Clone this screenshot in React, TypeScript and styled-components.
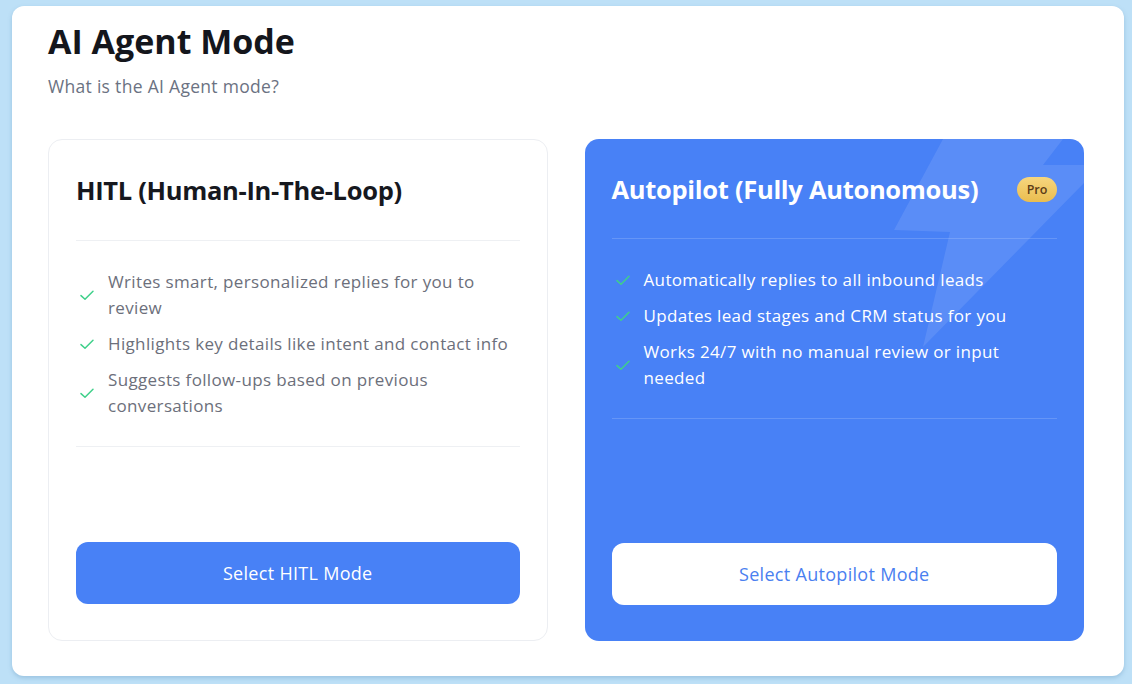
import styled, { createGlobalStyle } from "styled-components";

const GlobalStyle = createGlobalStyle`
  html, body {
    margin: 0;
    padding: 0;
    background: #bde0f7;
    font-family: "Open Sans", "Noto Sans", sans-serif;
  }
  * {
    box-sizing: border-box;
  }
`;

const Page = styled.div`
  width: 1132px;
  height: 684px;
  padding: 6px 8px 8px 12px;
`;

const Panel = styled.div`
  height: 100%;
  background: #ffffff;
  border-radius: 12px;
  box-shadow: 0 2px 4px rgba(90, 140, 180, 0.35);
  padding: 15px 40px 0 36px;
`;

const Title = styled.h1`
  margin: 0;
  font-size: 34px;
  line-height: 40px;
  font-weight: 700;
  color: #14161c;
`;

const Subtitle = styled.p`
  margin: 13px 0 0;
  font-size: 17.5px;
  line-height: 24px;
  letter-spacing: 0.3px;
  color: #6b7282;
`;

const Cards = styled.div`
  margin-top: 41px;
  display: grid;
  grid-template-columns: 1fr 1fr;
  gap: 37px;
  height: 502px;
`;

const Card = styled.div<{ $featured?: boolean }>`
  position: relative;
  overflow: hidden;
  display: flex;
  flex-direction: column;
  border-radius: 14px;
  padding: 34px 27px 36px;
  background: ${(p) => (p.$featured ? "#4881f6" : "#ffffff")};
  border: ${(p) => (p.$featured ? "none" : "1.5px solid #eceef2")};
`;

const Bolt = styled.svg`
  position: absolute;
  top: 0;
  right: 0;
  width: 500px;
  height: 502px;
  pointer-events: none;
`;

const Header = styled.div`
  position: relative;
  display: flex;
  align-items: center;
  justify-content: space-between;
  height: 32px;
`;

const CardTitle = styled.h2<{ $light?: boolean }>`
  margin: 0;
  font-size: 25.5px;
  line-height: 32px;
  font-weight: 700;
  letter-spacing: -0.3px;
  color: ${(p) => (p.$light ? "#ffffff" : "#16181e")};
`;

const ProBadge = styled.span`
  display: inline-flex;
  align-items: center;
  justify-content: center;
  width: 40px;
  height: 25px;
  border-radius: 13px;
  background: linear-gradient(180deg, #f6d67f 0%, #eabd4f 100%);
  color: #5b3c17;
  font-size: 12.5px;
  font-weight: 600;
`;

const Divider = styled.div<{ $light?: boolean }>`
  position: relative;
  height: 1px;
  background: ${(p) => (p.$light ? "rgba(255,255,255,0.16)" : "#eef0f3")};
  margin: ${(p) => (p.$light ? "33px 0 28px" : "34px 0 28px")};
`;

const List = styled.ul`
  position: relative;
  list-style: none;
  margin: 0;
  padding: 0 0 0 3px;
  display: flex;
  flex-direction: column;
  gap: 10px;
`;

const Item = styled.li<{ $light?: boolean }>`
  display: flex;
  align-items: center;
  gap: 13px;
  font-size: 17px;
  line-height: 26px;
  letter-spacing: 0.35px;
  color: ${(p) => (p.$light ? "#ffffff" : "#6c6f7b")};
`;

const Check = styled.svg`
  flex: none;
  width: 16px;
  height: 16px;
`;

const BottomDivider = styled(Divider)`
  margin: 27px 0 0;
`;

const SelectButton = styled.button<{ $inverse?: boolean }>`
  position: relative;
  margin-top: auto;
  height: 62px;
  width: 100%;
  border: none;
  border-radius: 12px;
  font-family: inherit;
  font-size: 18px;
  font-weight: 500;
  letter-spacing: 0.3px;
  cursor: pointer;
  background: ${(p) => (p.$inverse ? "#ffffff" : "#4881f6")};
  color: ${(p) => (p.$inverse ? "#4a80f0" : "#ffffff")};
`;

function CheckIcon() {
  return (
    <Check viewBox="0 0 16 16" fill="none">
      <path
        d="M2 8.6 L6 12.2 L14 4.2"
        stroke="#3fd08a"
        strokeWidth="1.5"
        strokeLinecap="round"
        strokeLinejoin="round"
      />
    </Check>
  );
}

const hitl = [
  "Writes smart, personalized replies for you to review",
  "Highlights key details like intent and contact info",
  "Suggests follow-ups based on previous conversations",
];

const autopilot = [
  "Automatically replies to all inbound leads",
  "Updates lead stages and CRM status for you",
  "Works 24/7 with no manual review or input needed",
];

export default function App() {
  return (
    <>
      <GlobalStyle />
      <Page>
        <Panel>
          <Title>AI Agent Mode</Title>
          <Subtitle>What is the AI Agent mode?</Subtitle>
          <Cards>
            <Card>
              <Header>
                <CardTitle>HITL (Human-In-The-Loop)</CardTitle>
              </Header>
              <Divider />
              <List>
                {hitl.map((t) => (
                  <Item key={t}>
                    <CheckIcon />
                    <span>{t}</span>
                  </Item>
                ))}
              </List>
              <BottomDivider />
              <SelectButton>Select HITL Mode</SelectButton>
            </Card>
            <Card $featured>
              <Bolt viewBox="0 0 500 502">
                <polygon
                  points="359,0 479,0 459,26 500,26 500,44 339,208 366,93 310,91"
                  fill="rgba(255,255,255,0.1)"
                />
              </Bolt>
              <Header>
                <CardTitle $light>Autopilot (Fully Autonomous)</CardTitle>
                <ProBadge>Pro</ProBadge>
              </Header>
              <Divider $light />
              <List>
                {autopilot.map((t) => (
                  <Item key={t} $light>
                    <CheckIcon />
                    <span>{t}</span>
                  </Item>
                ))}
              </List>
              <BottomDivider $light />
              <SelectButton $inverse>Select Autopilot Mode</SelectButton>
            </Card>
          </Cards>
        </Panel>
      </Page>
    </>
  );
}
